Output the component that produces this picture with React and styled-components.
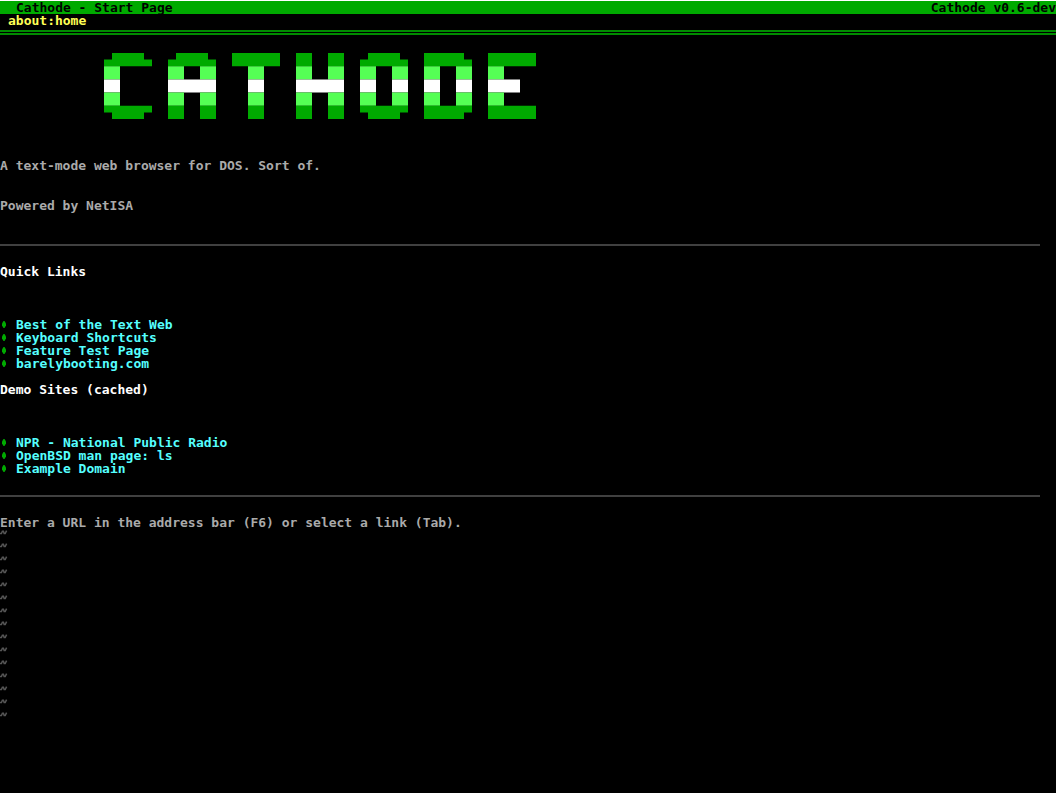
import { createGlobalStyle, styled } from "styled-components";

const Colors = {
  black: "#000000",
  white: "#ffffff",
  green: "#00aa00",
  darkGreen: "#008c00",
  lime: "#55ff55",
  yellow: "#ffff55",
  cyan: "#55ffff",
  gray: "#aaaaaa",
  dim: "#555555",
  rule: "#404040",
};

const quickLinks = [
  "Best of the Text Web",
  "Keyboard Shortcuts",
  "Feature Test Page",
  "barelybooting.com",
];

const demoSites = [
  "NPR - National Public Radio",
  "OpenBSD man page: ls",
  "Example Domain",
];

// Two half-height lines for every character row of the banner.
const banner = [
  " ####    ####   ######  ##  ##   ####   #####   ######",
  "######  ######  ######  ##  ##  ######  ######  ######",
  "##      ##  ##    ##    ##  ##  ##  ##  ##  ##  ##    ",
  "##      ##  ##    ##    ##  ##  ##  ##  ##  ##  ##    ",
  "##      ######    ##    ######  ##  ##  ##  ##  ####  ",
  "##      ######    ##    ######  ##  ##  ##  ##  ####  ",
  "##      ##  ##    ##    ##  ##  ##  ##  ##  ##  ##    ",
  "##      ##  ##    ##    ##  ##  ##  ##  ##  ##  ##    ",
  "######  ##  ##    ##    ##  ##  ######  ######  ######",
  " ####   ##  ##    ##    ##  ##   ####   #####   ######",
];

const bannerColors = [
  Colors.green,
  Colors.lime,
  Colors.white,
  Colors.lime,
  Colors.green,
];

function bannerPath(row) {
  return [row * 2, row * 2 + 1]
    .flatMap((y) =>
      [...banner[y].matchAll(/#+/g)].map(
        (run) => `M${run.index} ${y}h${run[0].length}v1h-${run[0].length}z`
      )
    )
    .join("");
}

function Banner() {
  return (
    <BannerSvg
      viewBox="0 0 54 10"
      preserveAspectRatio="none"
      role="img"
      aria-label="Cathode"
    >
      {bannerColors.map((color, row) => (
        <path key={row} d={bannerPath(row)} fill={color} />
      ))}
    </BannerSvg>
  );
}

function Links({ items }) {
  return (
    <LinkList>
      {items.map((item) => (
        <LinkItem key={item}>
          <Bullet viewBox="0 0 8 13" aria-hidden="true">
            <path d="M3.5 3H4.5L6 5.5V7.5L4.5 10H3.5L2 7.5V5.5Z" />
          </Bullet>
          <PageLink href="#">{item}</PageLink>
        </LinkItem>
      ))}
    </LinkList>
  );
}

export default function App() {
  return (
    <>
      <GlobalStyle />
      <TitleBar>
        <span>Cathode - Start Page</span>
        <span>Cathode v0.6-dev</span>
      </TitleBar>
      <AddressBar>
        <AddressInput
          type="text"
          aria-label="Address"
          defaultValue="about:home"
          spellCheck={false}
        />
      </AddressBar>
      <Page>
        <Intro>
          <Banner />
          <Text>A text-mode web browser for DOS. Sort of.</Text>
          <Text>Powered by NetISA</Text>
        </Intro>
        <Rule />
        <Heading>Quick Links</Heading>
        <Links items={quickLinks} />
        <Heading>Demo Sites (cached)</Heading>
        <Links items={demoSites} />
        <Rule />
        <Hint>Enter a URL in the address bar (F6) or select a link (Tab).</Hint>
        <Filler aria-hidden="true">
          {Array.from({ length: 15 }, (_, i) => (
            <Tilde key={i} viewBox="0 0 8 13">
              <path d="M0 4.5H1.4L2.4 2.2H3.4L4.2 4.5H5.2L6.6 1.6" />
            </Tilde>
          ))}
        </Filler>
      </Page>
    </>
  );
}

const GlobalStyle = createGlobalStyle`
  * {
    box-sizing: border-box;
  }

  body {
    margin: 0;
    background-color: ${Colors.black};
    color: ${Colors.gray};
    font: bold 13px/13px "DejaVu Sans Mono", monospace;
  }
`;

const TitleBar = styled.header`
  display: flex;
  justify-content: space-between;
  padding-left: 16px;
  border-top: 1px solid ${Colors.white};
  background-color: ${Colors.green};
  color: ${Colors.black};
`;

const AddressBar = styled.div`
  padding: 0 8px 3px;
  border-bottom: 5px double ${Colors.darkGreen};
`;

const AddressInput = styled.input`
  display: block;
  width: 100%;
  height: 13px;
  padding: 0;
  border: 0;
  outline: 0;
  background-color: transparent;
  color: ${Colors.yellow};
  font: inherit;
`;

const Page = styled.main`
  padding-top: 18px;
`;

const Intro = styled.section`
  margin-bottom: 32px;
`;

const BannerSvg = styled.svg`
  display: block;
  width: 432px;
  height: 66px;
  margin: 0 0 40px 104px;
`;

const Text = styled.p`
  margin: 0 0 27px;
`;

const Rule = styled.hr`
  height: 2px;
  margin: 20px 16px 19px 0;
  border: 0;
  background-color: ${Colors.rule};
`;

const Heading = styled.h2`
  margin: 0 0 40px;
  color: ${Colors.white};
  font: inherit;
`;

const LinkList = styled.ul`
  margin: 0 0 13px;
  padding: 0;
  list-style: none;
`;

const LinkItem = styled.li`
  display: flex;
  gap: 8px;
`;

const Bullet = styled.svg`
  width: 8px;
  height: 13px;
  fill: ${Colors.green};
`;

const PageLink = styled.a`
  color: ${Colors.cyan};
  text-decoration: none;
`;

const Hint = styled.p`
  margin: 0;
`;

const Filler = styled.div`
  display: flex;
  flex-direction: column;
`;

const Tilde = styled.svg`
  width: 8px;
  height: 13px;
  fill: none;
  stroke: ${Colors.dim};
  stroke-width: 1.5px;
`;
